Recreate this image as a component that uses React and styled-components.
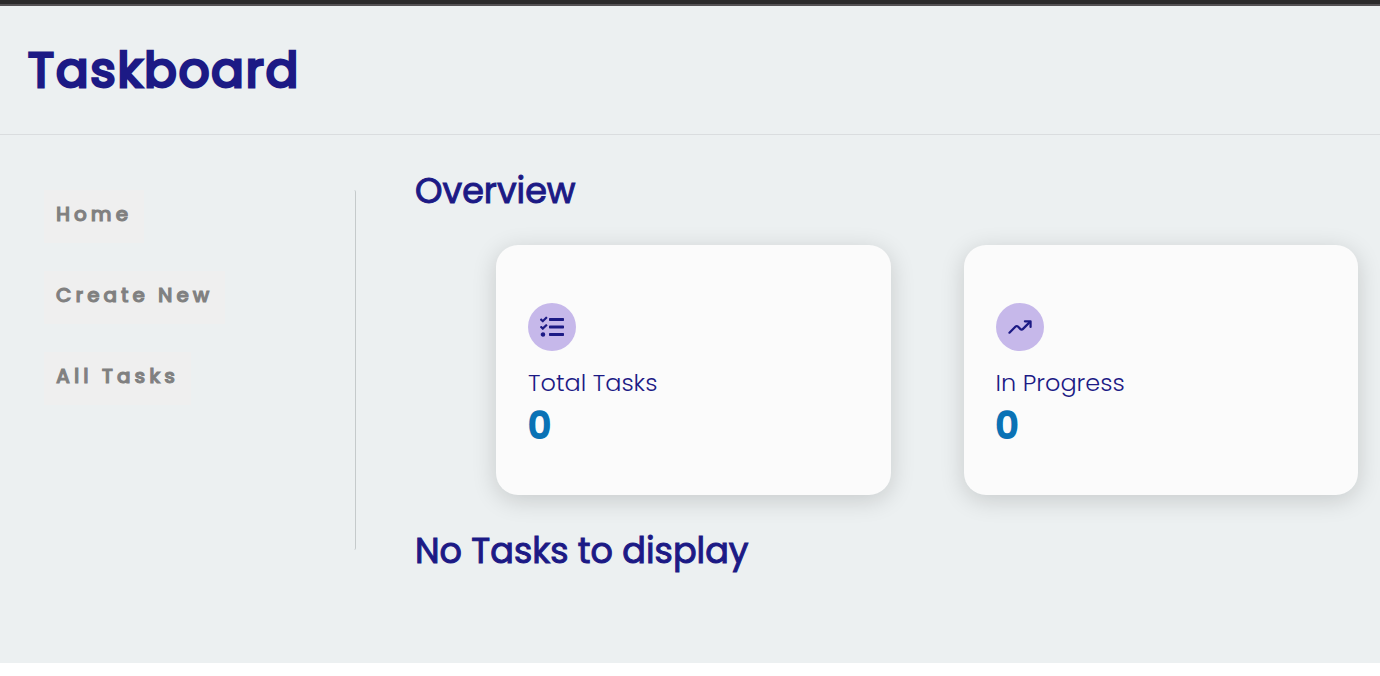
import React from "react";
import styled, { createGlobalStyle } from "styled-components";
import { FaTasks } from "react-icons/fa";
import { IoTrendingUp } from "react-icons/io5";

const GlobalStyle = createGlobalStyle`
  * { box-sizing: border-box; }
  body {
    margin: 0;
    background: #fff;
    color: #1c1a85;
    font-family: Poppins, Inter, sans-serif;
  }
  h1, h2, p, ul { margin: 0; padding: 0; }
`;

const Page = styled.div`
  background: #ecf0f1;
  border-top: 4px solid #2b2b2b;
`;

const Header = styled.header`
  padding: 29px 28px 27px;
  border-top: 2px solid #545254;
  border-bottom: 1px solid #dadddf;
`;

const Title = styled.h1`
  font-size: 48px;
  line-height: 72px;
  font-weight: 400;
  letter-spacing: 2px;
  -webkit-text-stroke: 3px currentColor;
`;

const Body = styled.div`
  display: flex;
  align-items: flex-start;
`;

const Sidebar = styled.nav`
  flex: 0 0 356px;
  height: 360px;
  margin-top: 55px;
  padding-left: 44px;
  border-right: 1px solid #c5cacb;
  border-radius: 2px;
`;

const NavList = styled.ul`
  display: flex;
  flex-direction: column;
  align-items: flex-start;
  gap: 28px;
  list-style: none;
`;

const NavButton = styled.button`
  display: block;
  padding: 8px 12px 13px;
  border: 0;
  background: #efefef;
  color: #808080;
  font: inherit;
  font-size: 20px;
  line-height: 32px;
  font-weight: 500;
  letter-spacing: 4px;
  -webkit-text-stroke: 1px currentColor;
  cursor: pointer;
`;

const Content = styled.main`
  flex: 1;
  min-width: 0;
  padding: 28px 22px 84px 59px;
`;

const SectionTitle = styled.h2`
  font-size: 35px;
  line-height: 56px;
  font-weight: 400;
  -webkit-text-stroke: 1px currentColor;
`;

const Cards = styled.section`
  display: grid;
  grid-template-columns: 1fr 1fr;
  gap: 73px;
  margin: 26px 0 28px 81px;
`;

const Card = styled.article`
  display: flex;
  flex-direction: column;
  align-items: flex-start;
  padding: 58px 32px 43px;
  border-radius: 22px;
  background: #fbfbfb;
  box-shadow: 0 5px 24px rgba(0, 0, 0, 0.16);
`;

const IconDisc = styled.span`
  display: flex;
  align-items: center;
  justify-content: center;
  width: 48px;
  height: 48px;
  margin-bottom: 15px;
  border-radius: 50%;
  background: #c6b8ea;
`;

const TrendIcon = styled(IoTrendingUp)`
  width: 26px;
  height: 26px;

  path, polyline { stroke-width: 44px; }
`;

const TasksIcon = styled(FaTasks)`
  width: 24px;
  height: 24px;
`;

const CardLabel = styled.p`
  font-size: 24px;
  line-height: 34px;
  font-weight: 300;
`;

const CardValue = styled.p`
  font-size: 36px;
  line-height: 52px;
  font-weight: 500;
  color: #0a72b5;
  -webkit-text-stroke: 2px currentColor;
`;

const links = ["Home", "Create New", "All Tasks"];

const stats = [
  { label: "Total Tasks", value: 0, Icon: TasksIcon },
  { label: "In Progress", value: 0, Icon: TrendIcon },
];

export default function App() {
  return (
    <>
      <GlobalStyle />
      <Page>
        <Header>
          <Title>Taskboard</Title>
        </Header>
        <Body>
          <Sidebar>
            <NavList>
              {links.map((link) => (
                <li key={link}>
                  <NavButton type="button">{link}</NavButton>
                </li>
              ))}
            </NavList>
          </Sidebar>
          <Content>
            <SectionTitle>Overview</SectionTitle>
            <Cards>
              {stats.map(({ label, value, Icon }) => (
                <Card key={label}>
                  <IconDisc>
                    <Icon aria-hidden="true" />
                  </IconDisc>
                  <CardLabel>{label}</CardLabel>
                  <CardValue>{value}</CardValue>
                </Card>
              ))}
            </Cards>
            <SectionTitle>No Tasks to display</SectionTitle>
          </Content>
        </Body>
      </Page>
    </>
  );
}
